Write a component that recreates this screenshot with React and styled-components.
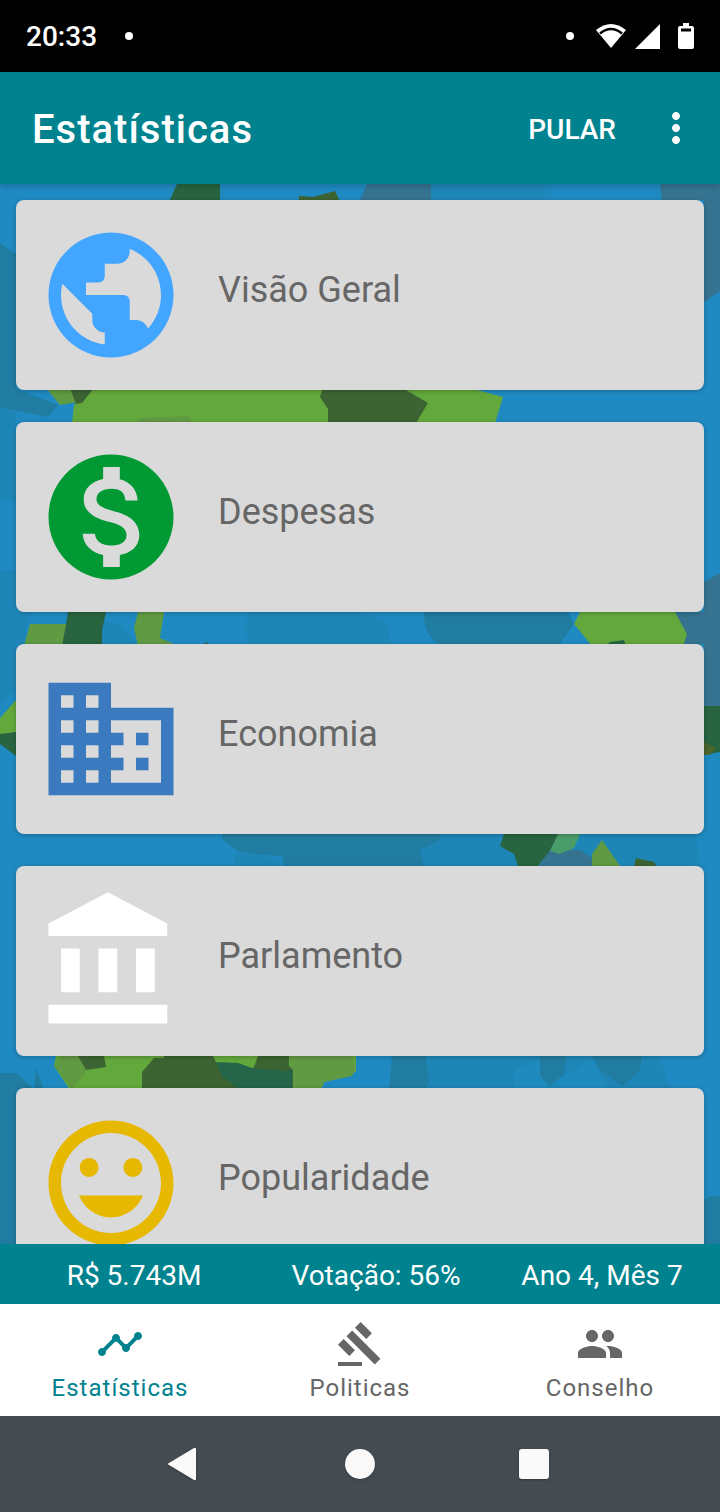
import React, { useState } from "react";
import styled, { createGlobalStyle } from "styled-components";
import {
  MdPublic,
  MdMonetizationOn,
  MdInsertEmoticon,
  MdTimeline,
  MdGavel,
  MdPeople,
  MdMoreVert,
} from "react-icons/md";

const GlobalStyle = createGlobalStyle`
  :root {
    --clr-primary: #00838f;
    --clr-card: #dadada;
    --clr-text: #666666;
    --clr-system: #444c52;
  }

  * {
    box-sizing: border-box;
  }

  body {
    margin: 0;
    font-family: Roboto, "Liberation Sans", sans-serif;
  }

  button {
    margin: 0;
    padding: 0;
    border: 0;
    background: none;
    font: inherit;
    color: inherit;
    cursor: pointer;
  }
`;

const BusinessIcon = () => (
  <svg viewBox="0 0 24 24" fill="currentColor" aria-hidden="true">
    <path d="M12 7V3H2v18h20V7H12zM6 19H4v-2h2v2zm0-4H4v-2h2v2zm0-4H4V9h2v2zm0-4H4V5h2v2zm4 12H8v-2h2v2zm0-4H8v-2h2v2zm0-4H8V9h2v2zm0-4H8V5h2v2zm10 12h-8v-2h2v-2h-2v-2h2v-2h-2V9h8v10zm-2-8h-2v2h2v-2zm0 4h-2v2h2v-2z" />
  </svg>
);

const ParliamentIcon = () => (
  <svg viewBox="0 0 24 24" fill="currentColor" aria-hidden="true">
    <path d="M4 10v7h3v-7H4zm6 0v7h3v-7h-3zM2 22h19v-3H2v3zm14-12v7h3v-7h-3zm-4.5-9L2 6v2h19V6l-9.5-5z" />
  </svg>
);

const cards = [
  { label: "Visão Geral", color: "#42a5ff", Icon: MdPublic },
  { label: "Despesas", color: "#009933", Icon: MdMonetizationOn },
  { label: "Economia", color: "#3b7abf", Icon: BusinessIcon },
  { label: "Parlamento", color: "#ffffff", Icon: ParliamentIcon },
  { label: "Popularidade", color: "#e6b800", Icon: MdInsertEmoticon },
];

const tabs = [
  { label: "Estatísticas", Icon: MdTimeline },
  { label: "Politicas", Icon: MdGavel },
  { label: "Conselho", Icon: MdPeople },
];

// world map behind the list
function MapBackground() {
  return (
    <Map viewBox="0 184 720 1060" preserveAspectRatio="xMidYMin slice" aria-hidden="true">
      <rect y="184" width="720" height="1060" fill="#1f8ac1" />
      <g fill="#1e86b7">
        <path d="M430 184h115v20H430zM0 407l16 4v92l-16-4zM0 570h16v120L0 704z" />
        <path d="M0 612h30l-6 32H0zM102 620l20 6 16 20h-36zM250 612h110l28 10 2 22H250l-6-16z" />
        <path d="M440 834h256l4 32H424l-6-12zM236 852l20 2 24 6 4 8h-52z" />
        <path d="M428 1056h230l6 14 6 20H428z" />
      </g>
      <path d="M512 1090l4-20 22-12 24 20 30-20 16 32z" fill="#1f8abd" />
      <g fill="#207ca0">
        <path d="M0 243l16 11v135l42 16-10 12-48-10z" />
        <path d="M424 612h144l6 12-16 22H444c-16-6-20-18-20-34z" />
        <path d="M222 834h218v6l-20 10 4 16H284l-2-10-20-1-24-4-16-12z" />
        <path d="M0 1073h16l16 14v3H16v156H0zM36 1068l8 22h-10z" />
        <path d="M392 1056h34l3 26-4 8h-36l2-22zM540 1056h26l-2 18-14 12-10-10zM592 1056h50l-2 14-18 16-20-14zM704 1200l6-4h10v48h-16z" />
      </g>
      <g fill="#357391">
        <path d="M367 184h64v16h-71zM660 184h60v107l-16 11v-102h-42zM674 612h30v-30l16-9v133h-16v-62h-22zM550 850h30l12 8v10h-54z" />
      </g>
      <g fill="#63a83c">
        <path d="M92 388h378l33 9-8 26H72l2-18 16-15zM580 612h95l12 22-4 12h-91l-18-22zM0 718l16-18v34l-16 4z" />
        <path d="M56 1056h300v16l-30 8-6 10H70L54 1066z" />
      </g>
      <g fill="#609a42">
        <path d="M46 388h30l2 14-18 3zM30 624h36v22H24zM138 612h26l-4 26 14 6-36 2-4-18zM592 866v-12l10-14 18 26z" />
        <path d="M62 1056h20l4 16-14 18L54 1066zM290 1056h62l4 12-4 8-28 6-4 10h-30zM140 418l50-2v6h-54z" />
      </g>
      <g fill="#3c6432">
        <path d="M70 388h24l-12 15-6 1zM322 390h84l22 13-12 20h-88v-14l-8-12z" />
        <path d="M78 1056h26l2 11-20 3zM142 1090v-18l12-14h10v-2h49l5 10 34 6 6-16h31v10l4 4v20z" />
        <path d="M299 196l14 1 22-6 6 12h-42zM634 866l2-8 18 4 2 4z" />
      </g>
      <g fill="#27643f">
        <path d="M177 184h43v20h-52zM68 612h38l-4 18v16H62l3-16zM610 642l14-2 2 6h-20zM204 644l3-2 2 4z" />
        <path d="M504 834h55l-10 18-11 14h-20l-4-12-14-8zM0 734l16-2v24l-16-12zM704 706h16v46l-16 3z" />
      </g>
      <path d="M216 1062l22 1 14 5 34 3 6-1v22h-50l-20-16z" fill="#25654a" />
      <path d="M558 834h22l-6 14-14 6-10-3z" fill="#4a9c68" />
      <path d="M704 742l12 6-6 7h-6z" fill="#4b652f" />
    </Map>
  );
}

function StatusBar() {
  return (
    <StatusWrapper>
      <Clock>20:33</Clock>
      <Dot />
      <StatusIcons>
        <Dot />
        <WifiIcon viewBox="0 0 32 26" aria-hidden="true">
          <path d="M1 7Q16-5 31 7L16 25z" fill="#fff" />
          <path d="M5 10.500Q16 1.500 27 10.500" fill="none" stroke="#000" strokeWidth="2.600" />
        </WifiIcon>
        <SignalIcon viewBox="0 0 25 25" aria-hidden="true">
          <path d="M25 0v25H0z" fill="#fff" />
        </SignalIcon>
        <BatteryIcon viewBox="0 0 16 26" aria-hidden="true">
          <path d="M5 0h6v3h3q2 0 2 2v19q0 2-2 2H2q-2 0-2-2V5q0-2 2-2h3z" fill="#fff" />
          <path d="M3 5.500h10v3H3z" fill="#000" />
        </BatteryIcon>
      </StatusIcons>
    </StatusWrapper>
  );
}

function App() {
  const [active, setActive] = useState("Estatísticas");

  return (
    <Wrapper>
      <GlobalStyle />
      <StatusBar />

      <Header>
        <h1>Estatísticas</h1>
        <SkipButton type="button">PULAR</SkipButton>
        <MenuButton type="button" aria-label="Mais opções">
          <MdMoreVert />
        </MenuButton>
      </Header>

      <Content>
        <MapBackground />
        <CardList>
          {cards.map(({ label, color, Icon }) => (
            <Card type="button" key={label}>
              <CardIcon $color={color}>
                <Icon />
              </CardIcon>
              <CardLabel>{label}</CardLabel>
            </Card>
          ))}
        </CardList>
      </Content>

      <Summary>
        <span>R$ 5.743M</span>
        <span>Votação: 56%</span>
        <span>Ano 4, Mês 7</span>
      </Summary>

      <Tabs>
        {tabs.map(({ label, Icon }) => (
          <Tab
            type="button"
            key={label}
            $active={active === label}
            onClick={() => setActive(label)}
          >
            <Icon />
            <span>{label}</span>
          </Tab>
        ))}
      </Tabs>

      <SystemBar>
        <button type="button" aria-label="Voltar">
          <svg viewBox="0 0 36 36">
            <path d="M28 3v30q0 2-2 1L1 19q-2-1 0-2L26 2q2-1 2 1z" />
          </svg>
        </button>
        <button type="button" aria-label="Início">
          <svg viewBox="0 0 36 36">
            <circle cx="18" cy="18" r="15" />
          </svg>
        </button>
        <button type="button" aria-label="Recentes">
          <svg viewBox="0 0 36 36">
            <rect x="3" y="3" width="30" height="30" rx="3" />
          </svg>
        </button>
      </SystemBar>
    </Wrapper>
  );
}

const Wrapper = styled.div`
  height: 100vh;
  display: flex;
  flex-direction: column;
`;

const StatusWrapper = styled.div`
  flex: none;
  display: flex;
  align-items: center;
  height: 72px;
  padding: 0 26px;
  background: #000;
  color: #fff;
`;

const Clock = styled.span`
  margin-right: 28px;
  padding-top: 2px;
  font-size: 28px;
  font-weight: 500;
  line-height: 32px;
`;

const Dot = styled.i`
  width: 8px;
  height: 8px;
  border-radius: 50%;
  background: #fff;
`;

const StatusIcons = styled.div`
  display: flex;
  align-items: center;
  margin-left: auto;
`;

const WifiIcon = styled.svg`
  width: 32px;
  height: 26px;
  margin-left: 21px;
`;

const SignalIcon = styled.svg`
  width: 25px;
  height: 25px;
  margin-left: 8px;
`;

const BatteryIcon = styled.svg`
  width: 16px;
  height: 26px;
  margin-left: 18px;
`;

const Header = styled.header`
  position: relative;
  z-index: 1;
  flex: none;
  display: flex;
  align-items: center;
  height: 112px;
  padding: 0 20px 0 32px;
  background: var(--clr-primary);
  color: #fff;
  box-shadow: 0 2px 6px rgba(0, 0, 0, 0.2);

  h1 {
    flex: 1;
    margin: 0;
    padding-top: 4px;
    font-size: 40px;
    font-weight: 500;
    line-height: 48px;
    letter-spacing: 1px;
  }
`;

const SkipButton = styled.button`
  padding-top: 4px;
  font-size: 28px;
  font-weight: 500;
  line-height: 32px;
`;

const MenuButton = styled.button`
  display: flex;
  margin-left: 36px;

  svg {
    width: 48px;
    height: 48px;
  }
`;

const Content = styled.main`
  position: relative;
  flex: 1;
  min-height: 0;
  overflow: hidden;
`;

const Map = styled.svg`
  position: absolute;
  inset: 0;
  width: 100%;
  height: 100%;
`;

const CardList = styled.div`
  position: relative;
  display: flex;
  flex-direction: column;
  gap: 32px;
  height: 100%;
  padding: 16px;
  overflow-y: auto;
  scrollbar-width: none;
`;

const Card = styled.button`
  flex: none;
  display: flex;
  align-items: center;
  height: 190px;
  border-radius: 8px;
  background: var(--clr-card);
  box-shadow: 0 1px 4px rgba(0, 0, 0, 0.25);
  text-align: left;
`;

const CardIcon = styled.span`
  display: flex;
  margin-left: 20px;
  color: ${({ $color }) => $color};

  svg {
    width: 150px;
    height: 150px;
  }
`;

const CardLabel = styled.span`
  margin-left: 32px;
  padding-bottom: 10px;
  font-size: 36px;
  line-height: 44px;
  color: var(--clr-text);
`;

const Summary = styled.div`
  flex: none;
  display: grid;
  grid-template-columns: 67fr 54fr 59fr;
  align-items: center;
  height: 60px;
  padding-top: 4px;
  background: var(--clr-primary);
  color: #fff;
  font-size: 28px;
  line-height: 32px;
  text-align: center;
`;

const Tabs = styled.nav`
  flex: none;
  display: grid;
  grid-template-columns: repeat(3, 1fr);
  height: 112px;
  background: #fff;
`;

const Tab = styled.button`
  display: flex;
  flex-direction: column;
  align-items: center;
  padding-top: 16px;
  color: ${({ $active }) => ($active ? "var(--clr-primary)" : "var(--clr-text)")};

  svg {
    width: 48px;
    height: 48px;
  }

  span {
    margin-top: 4px;
    font-size: 24px;
    line-height: 32px;
    letter-spacing: 1px;
  }
`;

const SystemBar = styled.div`
  flex: none;
  display: flex;
  justify-content: center;
  align-items: center;
  gap: 138px;
  height: 96px;
  background: var(--clr-system);

  button {
    display: flex;
  }

  svg {
    width: 36px;
    height: 36px;
    fill: #fafafa;
    filter: drop-shadow(0 1px 1px rgba(0, 0, 0, 0.3));
  }
`;

export default App;
